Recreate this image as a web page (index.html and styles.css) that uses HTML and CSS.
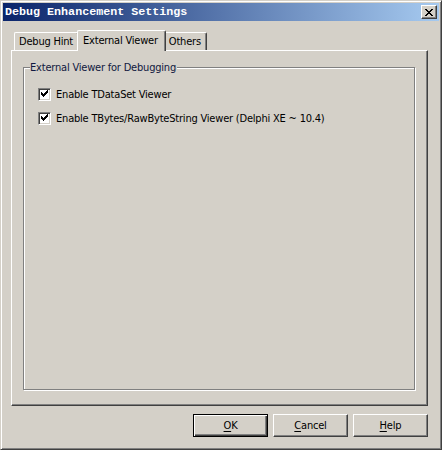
FILE: index.html
```html
<!DOCTYPE html>
<html>
<head>
<meta charset="utf-8">
<title>Debug Enhancement Settings</title>
<link rel="stylesheet" href="styles.css">
</head>
<body>
<div class="window">
  <div class="titlebar">
    <span class="title">Debug Enhancement Settings</span>
    <button class="close" aria-label="Close">
      <svg width="8" height="7" viewBox="0 0 8 7" shape-rendering="crispEdges">
        <path fill="#000" d="M0 0h2v1H0zM6 0h2v1H6zM1 1h2v1H1zM5 1h2v1H5zM2 2h4v1H2zM3 3h2v1H3zM2 4h4v1H2zM1 5h2v1H1zM5 5h2v1H5zM0 6h2v1H0zM6 6h2v1H6z"/>
      </svg>
    </button>
  </div>
  <div class="client">
    <div class="tabs">
      <div class="tab">Debug Hint</div>
      <div class="tab active">External Viewer</div>
      <div class="tab">Others</div>
    </div>
    <div class="page">
      <fieldset class="group">
        <legend>External Viewer for Debugging</legend>
        <div class="options">
          <label class="check">
            <span class="box">
              <svg width="9" height="9" viewBox="0 0 9 9" shape-rendering="crispEdges">
                <path fill="#000" d="M1 2h1v3H1zM2 3h1v3H2zM3 4h1v3H3zM4 3h1v3H4zM5 2h1v3H5zM6 1h1v3H6zM7 0h1v3H7z"/>
              </svg>
            </span>
            <span>Enable TDataSet Viewer</span>
          </label>
          <label class="check">
            <span class="box">
              <svg width="9" height="9" viewBox="0 0 9 9" shape-rendering="crispEdges">
                <path fill="#000" d="M1 2h1v3H1zM2 3h1v3H2zM3 4h1v3H3zM4 3h1v3H4zM5 2h1v3H5zM6 1h1v3H6zM7 0h1v3H7z"/>
              </svg>
            </span>
            <span>Enable TBytes/RawByteString Viewer (Delphi XE ~ 10.4)</span>
          </label>
        </div>
      </fieldset>
    </div>
    <div class="buttons">
      <button class="btn default"><u>O</u>K</button>
      <button class="btn"><u>C</u>ancel</button>
      <button class="btn"><u>H</u>elp</button>
    </div>
  </div>
</div>
</body>
</html>
```
FILE: styles.css
```css
* { box-sizing: border-box; }
html, body { margin: 0; padding: 0; }
body {
  background: #d4d0c8;
  font-family: "DejaVu Sans Condensed", "DejaVu Sans", sans-serif;
  font-size: 11px;
  letter-spacing: -0.2px;
  color: #000;
}
.window {
  width: 442px;
  height: 450px;
  display: flex;
  flex-direction: column;
  background: #d4d0c8;
  border: 1px solid;
  border-color: #d4d0c8 #404040 #404040 #d4d0c8;
  box-shadow: inset 1px 1px #fff, inset -1px -1px #808080;
  padding: 2px;
}
.titlebar {
  flex: none;
  height: 18px;
  display: flex;
  align-items: center;
  justify-content: space-between;
  background: linear-gradient(to right, #0a246a, #a6caf0);
  padding: 0 2px 0 2px;
}
.title {
  font-family: "Liberation Mono", monospace;
  font-weight: bold;
  font-size: 11.7px;
  letter-spacing: 0;
  color: #fff;
  white-space: nowrap;
}
.close {
  width: 16px;
  height: 14px;
  padding: 0 0 0 3px;
  margin: 0;
  display: flex;
  align-items: center;
  justify-content: flex-start;
  background: #d4d0c8;
  border: 1px solid;
  border-color: #fff #404040 #404040 #fff;
  box-shadow: inset -1px -1px #808080;
}
.close svg { display: block; }
.client {
  flex: 1;
  display: flex;
  flex-direction: column;
  padding: 9px 11px 10px 8px;
  min-height: 0;
}
.tabs {
  flex: none;
  height: 20px;
  display: flex;
  align-items: flex-end;
  padding-left: 3px;
}
.tab {
  height: 18px;
  padding: 0 5px 0 4px;
  display: flex;
  align-items: center;
  white-space: nowrap;
  background: #d4d0c8;
  border: 1px solid;
  border-bottom: none;
  border-color: #fff #404040 #fff #fff;
  box-shadow: inset -1px 0 #808080;
  border-radius: 2px 2px 0 0;
}
.tab.active {
  height: 21px;
  margin: 0 -2px -1px;
  padding: 0 7px 2px 5px;
  z-index: 1;
}
.page {
  flex: 1;
  display: flex;
  flex-direction: column;
  border: 1px solid;
  border-color: #fff #404040 #404040 #fff;
  box-shadow: inset -1px -1px #808080;
  padding: 10px 12px 15px 11px;
  min-height: 0;
}
.group {
  flex: 1;
  margin: 0;
  padding: 0;
  min-width: 0;
  border: 1px solid #808080;
  box-shadow: 1px 1px #fff, inset 1px 1px #fff;
}
.group legend {
  margin-left: 6px;
  padding: 0 1px 0 0;
  line-height: 13px;
  background: #d4d0c8;
  color: #101840;
}
.options {
  display: flex;
  flex-direction: column;
  gap: 11px;
  padding: 14px 0 0 14px;
}
.check {
  display: flex;
  align-items: center;
  gap: 5px;
  height: 13px;
  white-space: nowrap;
}
.box {
  flex: none;
  width: 13px;
  height: 13px;
  display: flex;
  align-items: center;
  justify-content: center;
  background: #fff;
  border: 1px solid;
  border-color: #808080 #fff #fff #808080;
  box-shadow: inset 1px 1px #404040, inset -1px -1px #d4d0c8;
}
.box svg { display: block; }
.buttons {
  flex: none;
  display: flex;
  justify-content: flex-end;
  gap: 5px;
  margin-top: 8px;
}
.btn {
  width: 75px;
  height: 23px;
  margin: 0;
  padding: 0;
  font-family: inherit;
  font-size: 11px;
  letter-spacing: -0.2px;
  color: #000;
  background: #d4d0c8;
  border: 1px solid;
  border-color: #fff #404040 #404040 #fff;
  box-shadow: inset -1px -1px #808080;
}
.btn.default {
  border: 1px solid #000;
  box-shadow: inset 1px 1px #fff, inset -1px -1px #404040, inset -2px -2px #808080;
}
.btn u { text-decoration: underline; text-underline-offset: 2px; }
```
